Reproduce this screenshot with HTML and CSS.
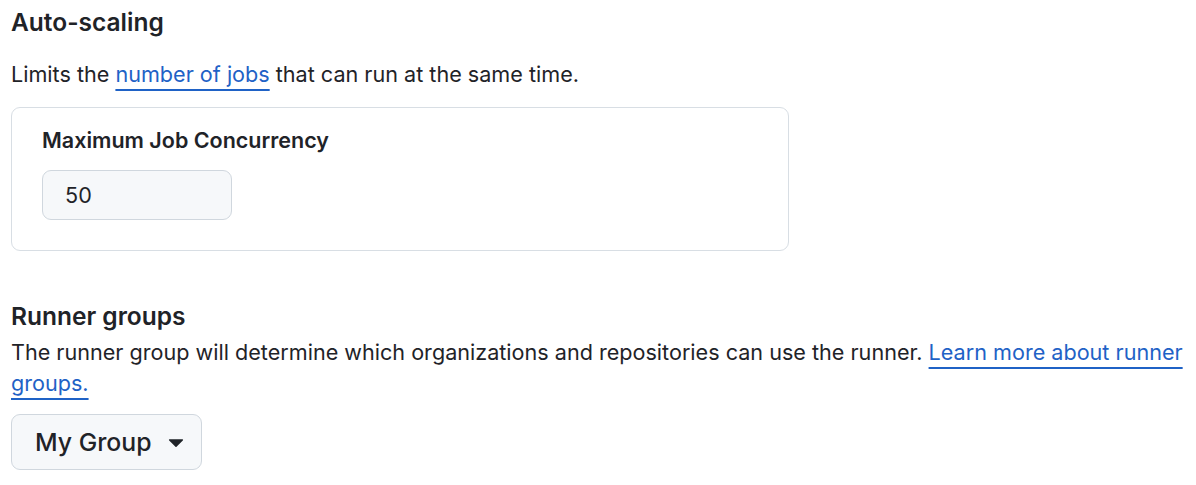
FILE: index.html
```html
<!DOCTYPE html>
<html lang="en">
<head>
<meta charset="utf-8">
<link rel="stylesheet" href="styles.css">
</head>
<body>
<div class="page">
  <section class="section">
    <h2 class="title">Auto-scaling</h2>
    <p class="desc">Limits the <a class="link" href="#">number of jobs</a> that can run at the same time.</p>
    <div class="card">
      <label class="label">Maximum Job Concurrency</label>
      <div class="input">50</div>
    </div>
  </section>
  <section class="section runners">
    <h2 class="title">Runner groups</h2>
    <p class="desc desc-tight">The runner group will determine which organizations and repositories can use the runner. <a class="link" href="#">Learn more about runner groups.</a></p>
    <button class="select" type="button">My Group <svg class="caret" viewBox="0 0 16 16"><path d="M4.4 6.4h7.2a.4.4 0 0 1 .3.7L8.3 10.7a.4.4 0 0 1-.6 0L4.1 7.1a.4.4 0 0 1 .3-.7z" fill="#1f2328"/></svg></button>
  </section>
</div>
</body>
</html>
```
FILE: styles.css
```css
* { box-sizing: border-box; }
html, body { margin: 0; padding: 0; background: #ffffff; }
body {
  font-family: Inter, "Noto Sans", "Liberation Sans", sans-serif;
  color: #1f2328;
  font-size: 21.6px;
}
.page {
  padding: 4px 0 0 11px;
  width: 1190px;
}
.title {
  margin: 0;
  font-size: 24.5px;
  font-weight: 600;
  line-height: 36px;
}
.desc {
  margin: 19px 0 0 0;
  line-height: 31px;
}
.desc-tight { margin-top: 3px; }
.link {
  color: #1f62c6;
  text-decoration: underline;
  text-decoration-thickness: 2px;
  text-underline-offset: 7px;
}
.card {
  margin-top: 17px;
  width: 778px;
  border: 1px solid #d8dee4;
  border-radius: 9px;
  padding: 17px 30px 30px 30px;
  display: flex;
  flex-direction: column;
  align-items: flex-start;
  gap: 15px;
}
.label {
  font-weight: 600;
  font-size: 21.5px;
  line-height: 30px;
}
.input {
  width: 190px;
  height: 50px;
  border: 1px solid #d0d7de;
  border-radius: 9px;
  background: #f6f8fa;
  padding: 0 22px;
  display: flex;
  align-items: center;
  font-size: 21.6px;
}
.runners { margin-top: 47px; }
.select {
  margin-top: 15px;
  width: 191px;
  height: 56px;
  border: 1px solid #d0d7de;
  border-radius: 9px;
  background: #f6f8fa;
  font-family: inherit;
  font-size: 24.8px;
  font-weight: 500;
  color: #1f2328;
  display: flex;
  align-items: center;
  gap: 10px;
  padding: 0 0 0 23px;
}
.caret { width: 28px; height: 28px; }
```
